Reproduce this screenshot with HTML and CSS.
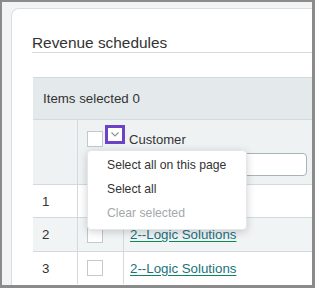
FILE: index.html
```html
<!DOCTYPE html>
<html>
<head>
<meta charset="utf-8">
<link rel="stylesheet" href="styles.css">
</head>
<body>
<div class="frame">
  <div class="card">
    <h1 class="title">Revenue schedules</h1>
    <div class="table">
      <div class="band">Items selected 0</div>
      <div class="row head">
        <div class="cell num"></div>
        <div class="cell sel">
          <span class="cb"></span>
          <span class="chev"><svg width="8" height="5" viewBox="0 0 8 5"><polyline points="0.5,0.5 4,4 7.5,0.5" fill="none" stroke="#8a9297" stroke-width="1.1"/></svg></span>
          <div class="colhead">
            <div class="label">Customer</div>
            <input class="search" type="text">
          </div>
          <div class="menu">
            <div class="item">Select all on this page</div>
            <div class="item">Select all</div>
            <div class="item disabled">Clear selected</div>
          </div>
        </div>
      </div>
      <div class="row r1">
        <div class="cell num">1</div>
        <div class="cell chk"><span class="cb"></span></div>
        <div class="cell name"></div>
      </div>
      <div class="row r2 alt">
        <div class="cell num">2</div>
        <div class="cell chk"><span class="cb"></span></div>
        <div class="cell name"><a class="link" href="#">2--Logic Solutions</a></div>
      </div>
      <div class="row r3">
        <div class="cell num">3</div>
        <div class="cell chk"><span class="cb"></span></div>
        <div class="cell name"><a class="link" href="#">2--Logic Solutions</a></div>
      </div>
    </div>
  </div>
</div>
</body>
</html>
```
FILE: styles.css
```css
* { box-sizing: border-box; }
html, body { margin: 0; padding: 0; }
body { font-family: "Liberation Sans", Arial, sans-serif; color: #333; }
.frame {
  width: 315px; height: 288px; overflow: hidden;
  background: #f1f3f4;
  border-style: solid; border-color: #8b8b8b;
  border-width: 2px 3px 3px 2px;
  padding: 6px 0 0 9px;
}
.card {
  width: 420px; height: 400px;
  background: #fff;
  border: 1px solid #d9dee1;
  border-radius: 8px 0 0 0;
  padding: 0 0 0 21px;
}
.title {
  margin: 25px 0 0 -1px;
  font-size: 15.4px; font-weight: normal; line-height: 18px;
  color: #333;
  border-bottom: 1px solid #d3d8dc;
  height: 19px;
}
.table { margin-top: 24px; }
.band {
  height: 43px;
  background: #e4e9eb;
  border-top: 1px solid #d3d9dc;
  border-bottom: 1px solid #d3d9dc;
  font-size: 13.3px; line-height: 15px;
  display: flex; align-items: center;
  padding-left: 10px;
}
.row { display: flex; border-top: 1px solid #d3d9dc; height: 33px; }
.row.head { border-top: none; height: 64px; background: #eff2f3; }
.row.r2 { height: 34px; }
.row.alt { background: #f1f4f5; }
.cell { height: 100%; }
.num {
  width: 45px; border-right: 1px solid #d3d9dc;
  font-size: 13.3px; padding-left: 9px;
  display: flex; align-items: center;
}
.chk {
  width: 46px; border-right: 1px solid #d3d9dc;
  padding-left: 9px; display: flex; align-items: center;
}
.name { padding-left: 6px; display: flex; align-items: center; font-size: 13.3px; }
.cb {
  display: inline-block; width: 16px; height: 16px;
  background: #fff; border: 1px solid #c2c9cd;
  flex: none;
}
.sel {
  position: relative; flex: 1;
  display: flex; align-items: flex-start;
  padding: 11px 0 0 9px;
}
.chev {
  flex: none;
  width: 20px; height: 19px; margin: -6px 0 0 2px;
  border: 3px solid #6d42c6; background: #fff;
  display: flex; align-items: center; justify-content: center;
}
.chev svg { display: block; }
.colhead { margin: 1px 0 0 4px; }
.label { font-size: 13.1px; line-height: 15px; color: #333; }
.search {
  display: block; margin-top: 6px;
  width: 178px; height: 23px;
  border: 1px solid #a9b2b7; border-radius: 4px; background: #fff;
}
.menu {
  position: absolute; left: 9px; top: 30px;
  width: 160px; height: 80px;
  background: #fff;
  border: 1px solid #e3e7e9;
  border-radius: 4px;
  box-shadow: 0 2px 8px rgba(0,0,0,0.18);
  padding: 2px 0 5px 0;
  z-index: 2;
}
.item { font-size: 12.2px; line-height: 24px; padding-left: 19px; color: #333; white-space: nowrap; }
.item.disabled { color: #a3a8ab; }
.link {
  color: #17737c;
  text-decoration: underline;
  text-decoration-color: #0a8a52;
  text-underline-offset: 2px;
  white-space: nowrap;
}
```
